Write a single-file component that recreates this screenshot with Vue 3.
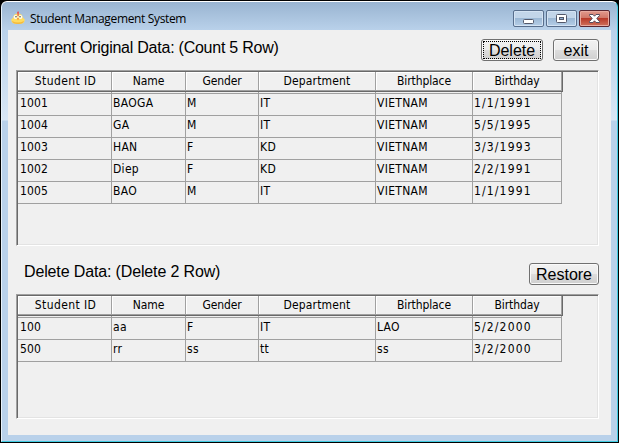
<script setup>
const columns = ['Student ID', 'Name', 'Gender', 'Department', 'Birthplace', 'Birthday']

const current = [
  ['1001', 'BAOGA', 'M', 'IT', 'VIETNAM', '1/1/1991'],
  ['1004', 'GA', 'M', 'IT', 'VIETNAM', '5/5/1995'],
  ['1003', 'HAN', 'F', 'KD', 'VIETNAM', '3/3/1993'],
  ['1002', 'Diep', 'F', 'KD', 'VIETNAM', '2/2/1991'],
  ['1005', 'BAO', 'M', 'IT', 'VIETNAM', '1/1/1991'],
]

const deleted = [
  ['100', 'aa', 'F', 'IT', 'LAO', '5/2/2000'],
  ['500', 'rr', 'ss', 'tt', 'ss', '3/2/2000'],
]

const sections = [
  { key: 'current', title: 'Current Original Data: (Count 5 Row)', rows: current, buttons: ['Delete', 'exit'] },
  { key: 'deleted', title: 'Delete Data: (Delete 2 Row)', rows: deleted, buttons: ['Restore'] },
]
</script>

<template>
  <div class="backdrop">
    <div class="window">
      <header class="titlebar">
        <svg class="app-icon" width="14" height="14" viewBox="0 0 14 14">
          <path d="M6 4V1.6L7.2 0 8 1.6V4Z" fill="#df5360" />
          <path d="M7 2.4C3.8 2.4 2.4 4.6 2.1 6.8L.3 8.2Q0 11.5 3 12.5Q7 13.6 11 12.5Q14 11.5 13.7 8.2L11.9 6.8C11.6 4.6 10.2 2.4 7 2.4Z" fill="#ffdc61" />
          <path d="M1 10Q7 13 13 10Q12.5 13 7 13Q1.5 13 1 10Z" fill="#f4b83e" />
          <ellipse cx="4.6" cy="6" rx="2" ry="2.1" fill="#fffdf0" />
          <ellipse cx="9.4" cy="6" rx="2" ry="2.1" fill="#fffdf0" />
          <path d="M6.4 1H7.8V4.5L7 5.2 6.4 4.5Z" fill="#e0605a" />
          <circle cx="5" cy="5.8" r=".8" fill="#59503f" />
          <circle cx="9" cy="5.8" r=".8" fill="#59503f" />
          <path d="M5.8 7.2H8.2L7 9.2Z" fill="#ee872e" />
        </svg>
        <span class="caption">Student Management System</span>
        <div class="controls">
          <span class="control">
            <svg width="29" height="15" viewBox="0 0 29 15">
              <rect x="9.5" y="8.5" width="10" height="4" rx="1" fill="#fff" stroke="#53586a" />
            </svg>
          </span>
          <span class="control">
            <svg width="29" height="15" viewBox="0 0 29 15">
              <rect x="9.5" y="3.5" width="10" height="8" rx="1" fill="#fff" stroke="#53586a" />
              <rect x="12.5" y="6.5" width="4" height="2" fill="#8fafd1" stroke="#53586a" />
            </svg>
          </span>
          <span class="control close">
            <svg width="29" height="15" viewBox="0 0 29 15">
              <path d="M9.5 3.5H13L14.5 5.2 16 3.5H19.5V4.5L16.8 7.5 19.5 10.5V11.5H16L14.5 9.8 13 11.5H9.5V10.5L12.2 7.5 9.5 4.5Z" fill="#fff" stroke="#574d5e" />
            </svg>
          </span>
        </div>
      </header>
      <main class="content">
        <section v-for="s in sections" :key="s.key" class="section" :class="s.key">
          <div class="toolbar">
            <h2>{{ s.title }}</h2>
            <div class="actions">
              <button v-for="b in s.buttons" :key="b" :class="b.toLowerCase()"><span>{{ b }}</span></button>
            </div>
          </div>
          <div class="pane">
            <div class="grid head">
              <span v-for="c in columns" :key="c" class="th">{{ c }}</span>
            </div>
            <div class="grid spacer"><span v-for="c in columns" :key="c"></span></div>
            <div v-for="r in s.rows" :key="r[0]" class="grid row">
              <span v-for="(v, i) in r" :key="i" class="td">{{ v }}</span>
            </div>
          </div>
        </section>
      </main>
    </div>
  </div>
</template>

<style>
body {
  margin: 0;
  overflow: hidden;
}
</style>

<style scoped>
* {
  box-sizing: border-box;
}
.backdrop {
  width: 619px;
  height: 443px;
  padding: 1px;
  background: #000;
}
.window {
  width: 617px;
  height: 441px;
  padding: 0 6px 6px;
  border: 1px solid #40cbe1;
  border-top-color: #fff;
  border-left-color: #e8f2fa;
  border-radius: 6px 6px 0 0;
  background: linear-gradient(#99b4d1 0, #b9d1ea 28px, #d9e7f5 118px, #b9d1ea 119px);
}
.titlebar {
  display: flex;
  height: 28px;
  padding-left: 3px;
}
.app-icon {
  margin-top: 9px;
}
.caption {
  margin: 9px 0 0 5px;
  font: 12px/16px "Open Sans", sans-serif;
  letter-spacing: -0.35px;
  white-space: nowrap;
  color: #000;
}
.controls {
  display: flex;
  gap: 2px;
  margin: 8px 1px 0 auto;
}
.control {
  width: 31px;
  height: 17px;
  border: 1px solid #586e8c;
  border-radius: 2px;
  background: linear-gradient(#c2d5e9 0 45%, #9cb8d5 50%, #b5cee7);
  box-shadow: inset 0 0 0 1px #d4e3f3;
}
.control svg {
  display: block;
}
.control.close {
  border-color: #5a2630;
  background: linear-gradient(#e29a8d 0, #d17869 45%, #b93a29 50%, #cf725c);
  box-shadow: inset 0 0 0 1px #e8aa9f;
}
.content {
  height: 405px;
  padding: 0 12px 0 8px;
  background: #f0f0f0;
}
.toolbar {
  display: flex;
  justify-content: space-between;
  height: 40px;
  padding: 9px 0 0 8px;
}
.deleted .toolbar {
  height: 48px;
  padding-top: 17px;
}
h2 {
  margin: 0;
  font: 16px/18px "Liberation Sans", Arial, sans-serif;
  letter-spacing: -0.24px;
  white-space: nowrap;
  color: #000;
}
.deleted h2 {
  letter-spacing: -0.14px;
}
.actions {
  display: flex;
  gap: 10px;
}
button {
  height: 22px;
  width: 46px;
  padding: 1px;
  border: 1px solid #707070;
  border-radius: 3px;
  background: linear-gradient(#f2f2f2 0, #ebebeb 49%, #dddddd 50%, #cfcfcf);
  box-shadow: inset 0 0 0 1px #fafafa;
  font: 16px/20px "Liberation Sans", Arial, sans-serif;
  color: #000;
}
button span {
  display: block;
  height: 18px;
  line-height: 20px;
}
button.delete {
  width: 62px;
}
button.delete span {
  border: 1px dotted #000;
  line-height: 17px;
}
button.restore {
  width: 70px;
}
.pane {
  height: 176px;
  border: 1px solid;
  border-color: #a0a0a0 #fff #fff #a0a0a0;
  box-shadow: inset 1px 1px #696969, inset -1px -1px #e3e3e3;
  padding: 1px;
}
.deleted .pane {
  height: 125px;
}
.grid {
  display: grid;
  grid-template-columns: 94px 74px 73px 117px 97px 89px;
  width: 544px;
  font: 12px/16px "DejaVu Sans Condensed", "DejaVu Sans", sans-serif;
  color: #000;
}
.head {
  width: 545px;
  height: 20px;
  border-right: 1px solid #696969;
  border-bottom: 1px solid #696969;
}
.th {
  height: 19px;
  padding-top: 1px;
  border-right: 1px solid #a0a0a0;
  border-bottom: 1px solid #a0a0a0;
  box-shadow: inset 1px 1px #fff;
  text-align: center;
  letter-spacing: -0.1px;
  white-space: nowrap;
}
.th:nth-child(1) {
  padding-left: 2px;
  letter-spacing: 0.4px;
}
.th:nth-child(4) {
  letter-spacing: 0.15px;
}
.spacer {
  height: 2px;
  border-bottom: 1px solid #a0a0a0;
}
.spacer span {
  border-right: 1px solid #a0a0a0;
}
.row {
  height: 22px;
}
.td {
  height: 22px;
  padding: 1px 0 0 1px;
  border-right: 1px solid #a0a0a0;
  border-bottom: 1px solid #a0a0a0;
  letter-spacing: 0.3px;
  white-space: nowrap;
}
.td:first-child {
  padding-left: 2px;
  letter-spacing: 0.1px;
}
.td:last-child {
  letter-spacing: 1.15px;
}
</style>
